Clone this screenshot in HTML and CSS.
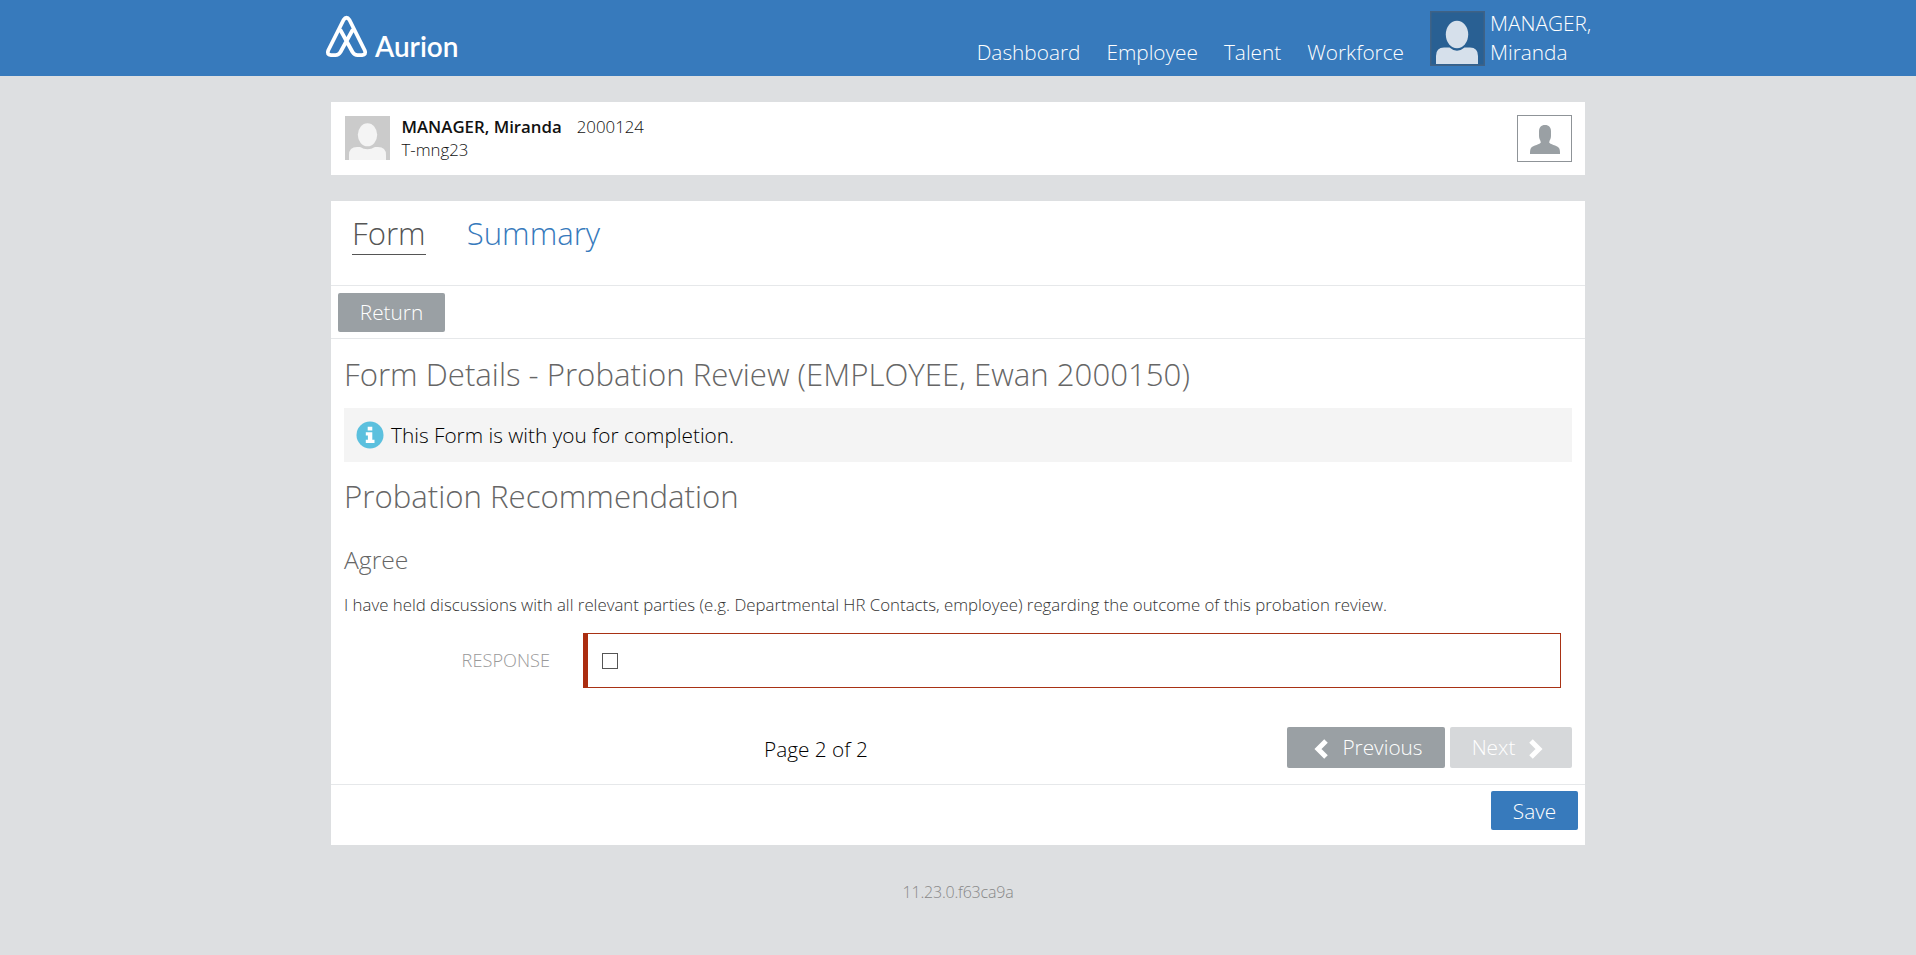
FILE: index.html
```html
<!DOCTYPE html>
<html lang="en">
<head>
<meta charset="utf-8">
<title>Aurion - Probation Review</title>
<link rel="stylesheet" href="styles.css">
</head>
<body>
<header class="topbar">
  <div class="topbar-inner">
    <a class="brand">
      <svg class="brand-mark" viewBox="0 0 42 42" width="42" height="42" fill="none" stroke="#fff" stroke-width="3.800" stroke-linejoin="round" stroke-linecap="round"><path d="M14.700 14.500 26.500 36Q28.500 39.200 31.500 39.200H36Q40.500 38.500 38.800 34.500L23.500 4Q20.500 -0.500 17.500 4L2.200 34.500Q.5 38.500 5 39.200H9.500Q12.500 39.200 14.500 36L26.300 14.500"/></svg>
      <span class="brand-name">Aurion</span>
    </a>
    <nav class="nav">
      <a class="nav-link">Dashboard</a>
      <a class="nav-link">Employee</a>
      <a class="nav-link">Talent</a>
      <a class="nav-link">Workforce</a>
    </nav>
    <div class="user">
      <svg class="user-photo" viewBox="0 0 55 55" width="55" height="55"><rect x=".75" y=".75" width="53.500" height="53.500" fill="#296093" stroke="#3f6286" stroke-width="1.500"/><path d="M6 53V45Q6 36.500 14 36.500H19.500Q27 43 34.500 36.500H40Q48 36.500 48 45V53Z" fill="#d6e0eb"/><ellipse cx="27" cy="23.500" rx="11.200" ry="13.700" fill="#d6e0eb"/></svg>
      <span class="user-name">MANAGER,<br>Miranda</span>
    </div>
  </div>
</header>
<main class="page">
  <section class="card person">
    <svg class="person-photo" viewBox="0 0 45 44" width="45" height="44"><rect width="45" height="44" fill="#cbcbcb"/><path d="M4 44V39Q4 31 12 31H15Q22.500 35.500 30 31H33Q41 31 41 39V44Z" fill="#f4f4f4"/><ellipse cx="22.500" cy="18.800" rx="9.700" ry="11.500" fill="#f4f4f4"/></svg>
    <div class="person-text">
      <div><strong class="person-name">MANAGER, Miranda</strong><span class="person-id">2000124</span></div>
      <div class="person-role">T-mng23</div>
    </div>
    <a class="profile-button"><svg viewBox="0 0 30 29" width="30" height="29" fill="#9aa0a4"><path d="M15 0C19 0 21 2.500 21 6.500V11C21 14 19.500 15 19.200 17.500C19.500 19 27 20.500 29 23C30 24.500 30 26.500 30 29H0C0 26.500 0 24.500 1 23C3 20.500 10.500 19 10.800 17.500C10.500 15 9 14 9 11V6.500C9 2.500 11 0 15 0Z"/></svg></a>
  </section>
  <section class="card form-card">
    <div class="tabs"><a class="tab active">Form</a><a class="tab">Summary</a></div>
    <div class="toolbar"><button class="btn return">Return</button></div>
    <div class="form-body">
      <h1 class="title">Form Details - Probation Review (EMPLOYEE, Ewan 2000150)</h1>
      <div class="notice">
        <svg viewBox="0 0 28 28" width="28" height="28"><circle cx="14" cy="14" r="13.500" fill="#5bc0de"/><path d="M11.700 5.700h4.600v3.700h-4.600zM9.800 11.200h6.500v7.600h2.200v3.200H9.800v-3.200h2.100v-4.400H9.800z" fill="#fff"/></svg>
        <span class="notice-text">This Form is with you for completion.</span>
      </div>
      <h2 class="section-title">Probation Recommendation</h2>
      <h3 class="question">Agree</h3>
      <p class="description">I have held discussions with all relevant parties (e.g. Departmental HR Contacts, employee) regarding the outcome of this probation review.</p>
      <div class="field"><label class="field-label">RESPONSE</label><div class="field-box"><span class="checkbox"></span></div></div>
      <div class="pager">
        <span class="page-count">Page 2 of 2</span>
        <button class="btn previous"><svg viewBox="0 0 14 20" width="14" height="20" fill="none" stroke="#fff" stroke-width="5"><path d="M12 2 4 10l8 8"/></svg>Previous</button>
        <button class="btn next">Next<svg viewBox="0 0 14 20" width="14" height="20" fill="none" stroke="#fff" stroke-width="5"><path d="M2 2l8 8-8 8"/></svg></button>
      </div>
    </div>
    <div class="actions"><button class="btn save">Save</button></div>
  </section>
  <footer class="version">11.23.0.f63ca9a</footer>
</main>
</body>
</html>
```
FILE: styles.css
```css
* { box-sizing: border-box; }
body { margin: 0; min-height: 955px; background: #dddfe1; color: #111; font: 300 16.82px/23px "Open Sans", sans-serif; }
h1, h2, h3, p { margin: 0; font-weight: 300; }
svg { display: block; flex: none; overflow: visible; }
.topbar { height: 76px; background: #377abc; color: #fff; }
.topbar-inner { width: 1266px; height: 76px; margin: 0 auto; display: flex; align-items: flex-start; }
.brand { display: flex; align-items: flex-end; gap: 7px; padding: 16px 0 0 1px; }
.brand-name { font: 600 28px/29px Lato, sans-serif; height: 26px; letter-spacing: 0; }
.nav { display: flex; gap: 26px; margin-left: auto; padding-top: 38px; }
.nav-link { font-size: 20.8px; line-height: 29px; white-space: nowrap; }
.user { display: flex; gap: 5px; width: 161px; padding-top: 9px; margin-left: 26px; }
.user-photo { margin-top: 2px; }
.user-name { font-size: 20.8px; line-height: 29px; }
.page { width: 1254px; margin: 26px auto 0; }
.card { background: #fff; }
.person { display: flex; height: 73px; padding: 13px 13px 0; align-items: flex-start; }
.person-photo { margin: 1px 0 0 1px; }
.person-text { margin-left: 11.5px; flex: 1; }
.person-name { font-weight: 600; }
.person-id { margin-left: 15px; }
.profile-button { width: 55px; height: 47px; border: 1px solid #8f9498; display: flex; align-items: center; justify-content: center; padding-top: 2px; }
.form-card { height: 644px; margin-top: 26px; }
.tabs { display: flex; gap: 41px; height: 84px; padding: 11px 21px 0; }
.tab { height: 43px; font-size: 31.2px; line-height: 43px; color: #377abc; }
.tab.active { color: #555; border-bottom: 1px solid #555; }
.toolbar { height: 54px; padding: 7px 7px 0; border-top: 1px solid #e6e8ea; border-bottom: 1px solid #e6e8ea; }
.btn { display: flex; align-items: center; justify-content: center; border: 0; border-radius: 2px; padding: 0; background: #9aa0a4; color: #fff; font: 300 20.8px/29px "Open Sans", sans-serif; }
.return { width: 107px; height: 39px; }
.form-body { height: 445px; padding: 0 13px; }
.title, .section-title { color: #666; font-size: 31.2px; line-height: 43px; }
.title { padding-top: 14px; height: 69px; }
.notice { height: 54px; background: #f4f4f4; padding: 0 12px; display: flex; gap: 7px; align-items: center; }
.notice-text { font-size: 20.8px; color: #000; }
.section-title { height: 80px; padding-top: 13px; }
.question { height: 49px; padding-top: 1px; color: #666; font-size: 24.7px; line-height: 34px; }
.description { height: 42px; line-height: 28px; color: #333; white-space: nowrap; }
.field { display: flex; height: 55px; align-items: center; }
.field-label { width: 206px; margin-right: 33px; text-align: right; color: #999; font-size: 18.2px; }
.field-box { width: 978px; height: 55px; padding: 19px 14px; border: 1px solid #a83214; border-left: 5px solid #ab2d10; }
.checkbox { display: block; width: 16px; height: 16px; border: 1px solid #555; }
.pager { display: flex; padding-top: 39px; }
.page-count { width: 943px; padding: 8px 0 0 420px; font-size: 20.8px; line-height: 29px; color: #000; }
.previous { width: 158px; height: 41px; margin-right: 5px; padding-left: 5px; gap: 14px; }
.next { width: 122px; height: 41px; padding-right: 7px; gap: 14px; background: #d6d8da; }
.previous svg, .next svg { margin-top: 2px; }
.actions { display: flex; justify-content: flex-end; padding: 6px 7px 0; border-top: 1px solid #e6e8ea; }
.save { width: 87px; height: 39px; padding-top: 2px; background: #377abc; }
.version { margin-top: 36px; text-align: center; color: #888; font-size: 16px; line-height: 22px; letter-spacing: -0.2px; }
```
